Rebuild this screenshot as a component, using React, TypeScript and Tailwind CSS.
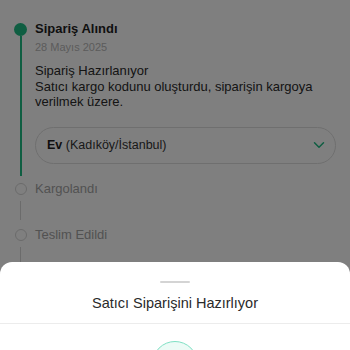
import { ChevronDown } from "lucide-react";

const font = { fontFamily: '"Liberation Sans", Arial, sans-serif' };

function TimelineStep({ label, lineBelow }: { label: string; lineBelow: boolean }) {
    return (
        <div className="flex">
            <div className="ml-[14px] flex w-[13px] flex-col items-center">
                <div className="mt-[3px] h-[12px] w-[12px] rounded-full border-[1.5px] border-[#d6d6d6] bg-white" />
                {lineBelow && <div className="my-[6px] h-[19px] w-[1.5px] bg-[#d6d6d6]" />}
            </div>
            <div className="ml-[8px] h-[18px] text-[13px] leading-[18px] text-[#a4a4a4]">{label}</div>
        </div>
    );
}

export default function App() {
    return (
        <div className="relative h-[350px] w-[350px] overflow-hidden bg-white" style={font}>
            {/* Timeline */}
            <div className="pt-[20px]">
                <div className="flex">
                    <div className="ml-[14px] flex w-[13px] flex-col items-center">
                        <div className="mt-[3px] h-[13px] w-[13px] rounded-full bg-[#1ebc84]" />
                        <div className="w-[2px] flex-1 bg-[#1ebc84]" />
                    </div>
                    <div className="ml-[8px] flex-1 pb-[12px] pr-[14px]">
                        <div className="text-[13px] font-bold leading-[18px] text-[#1f1f1f]">Sipariş Alındı</div>
                        <div className="text-[11px] leading-[18px] text-[#b8b8b8]">28 Mayıs 2025</div>
                        <div className="mt-[7px] text-[13px] leading-[15.5px] text-[#2a2a2a]">
                            Sipariş Hazırlanıyor
                            <br />
                            Satıcı kargo kodunu oluşturdu, siparişin kargoya verilmek üzere.
                        </div>
                        <div className="mt-[17px] flex h-[37px] items-center justify-between rounded-full border border-[#dedede] pl-[11px] pr-[7px]">
                            <div className="text-[12.5px] text-[#333333]">
                                <span className="font-bold text-[#1f1f1f]">Ev</span> (Kadıköy/İstanbul)
                            </div>
                            <ChevronDown size={18} strokeWidth={2} className="text-[#1ebc84]" />
                        </div>
                    </div>
                </div>
                <div className="mt-[4px]">
                    <TimelineStep label="Kargolandı" lineBelow />
                    <TimelineStep label="Teslim Edildi" lineBelow />
                </div>
            </div>

            {/* Dim overlay */}
            <div className="absolute inset-0 bg-black/50" />

            {/* Bottom sheet */}
            <div className="absolute inset-x-0 bottom-0 top-[262px] rounded-t-[12px] bg-white">
                <div className="mx-auto mt-[19px] h-[2px] w-[30px] rounded-full bg-[#d4d4d4]" />
                <div className="mt-[10px] text-center text-[14.5px] leading-[20px] text-[#2a2a2a]">
                    Satıcı Siparişini Hazırlıyor
                </div>
                <div className="mt-[10px] h-px bg-[#ececec]" />
                <div className="mx-auto mt-[17px] h-[46px] w-[46px] rounded-full border-[1.5px] border-[#7fe0c4] bg-[#ecfbf6]" />
            </div>
        </div>
    );
}
